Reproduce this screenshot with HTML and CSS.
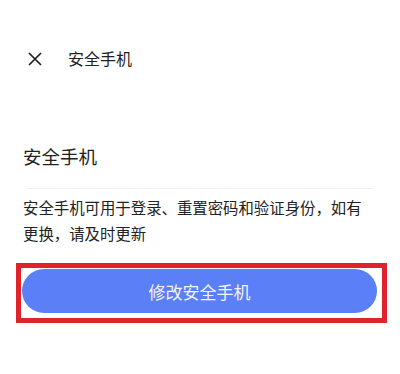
FILE: index.html
```html
<!DOCTYPE html>
<html lang="zh-CN">
<head>
<meta charset="utf-8">
<link rel="stylesheet" href="styles.css">
</head>
<body>
<div class="page">
  <header class="topbar">
    <svg class="close" width="14" height="14" viewBox="0 0 14 14"><path d="M1 1 L13 13 M13 1 L1 13" stroke="#1f1f1f" stroke-width="1.7" fill="none"/></svg>
    <span class="topbar-title">安全手机</span>
  </header>
  <h2 class="section-title">安全手机</h2>
  <div class="divider"></div>
  <p class="desc">安全手机可用于登录、重置密码和验证身份，如有更换，请及时更新</p>
  <div class="highlight">
    <button class="action">修改安全手机</button>
  </div>
</div>
</body>
</html>
```
FILE: styles.css
```css
html, body {
  margin: 0;
  padding: 0;
  background: #fff;
}
body {
  font-family: "Noto Sans CJK SC", "Noto Sans", sans-serif;
  color: #222;
  width: 400px;
  height: 374px;
  overflow: hidden;
}
.page {
  display: flex;
  flex-direction: column;
}
.topbar {
  display: flex;
  align-items: center;
  gap: 26px;
  padding: 42px 0 0 28px;
  height: 33px;
}
.close {
  display: block;
  flex: none;
}
.topbar-title {
  font-size: 16px;
  line-height: 33px;
}
.section-title {
  margin: 69px 0 0 23px;
  font-size: 18.5px;
  font-weight: normal;
  line-height: 24px;
}
.divider {
  margin: 20px 0 0 27px;
  width: 346px;
  height: 1px;
  background: #f0f0f0;
}
.desc {
  margin: 5px 0 0 0;
  padding: 0 25px 0 23px;
  font-size: 15.4px;
  line-height: 26px;
}
.highlight {
  box-sizing: border-box;
  margin: 17px 0 0 16px;
  width: 371px;
  height: 60px;
  border: 5px solid #e0222b;
  padding: 1px 5px 5px 1px;
}
.action {
  display: block;
  width: 355px;
  height: 44px;
  border: none;
  border-radius: 22px;
  background: #5b7ff7;
  color: #f3f5ff;
  font-family: "Noto Sans CJK SC", "Noto Sans", sans-serif;
  font-size: 17px;
  padding: 0;
}
```
